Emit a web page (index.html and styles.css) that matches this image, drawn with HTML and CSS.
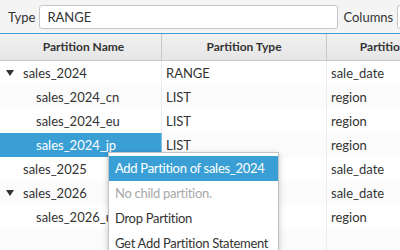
FILE: index.html
```html
<!DOCTYPE html>
<html>
<head>
<meta charset="utf-8">
<link rel="stylesheet" href="styles.css">
</head>
<body>
<div class="app">
  <div class="toolbar">
    <span class="label">Type</span>
    <div class="field field-type">RANGE</div>
    <span class="label label-cols">Columns</span>
    <div class="field field-cols"></div>
  </div>
  <div class="table">
    <div class="header">
      <div class="hcell c1">Partition Name</div>
      <div class="hcell c2">Partition Type</div>
      <div class="hcell c3">Partition Columns</div>
    </div>
    <div class="row">
      <div class="cell c1"><span class="arrow"></span>sales_2024</div>
      <div class="cell c2">RANGE</div>
      <div class="cell c3">sale_date</div>
    </div>
    <div class="row alt">
      <div class="cell c1 child">sales_2024_cn</div>
      <div class="cell c2">LIST</div>
      <div class="cell c3">region</div>
    </div>
    <div class="row">
      <div class="cell c1 child">sales_2024_eu</div>
      <div class="cell c2">LIST</div>
      <div class="cell c3">region</div>
    </div>
    <div class="row alt">
      <div class="cell c1 child selected">sales_2024_jp</div>
      <div class="cell c2">LIST</div>
      <div class="cell c3">region</div>
    </div>
    <div class="row">
      <div class="cell c1 leaf">sales_2025</div>
      <div class="cell c2">RANGE</div>
      <div class="cell c3">sale_date</div>
    </div>
    <div class="row alt">
      <div class="cell c1"><span class="arrow"></span>sales_2026</div>
      <div class="cell c2">RANGE</div>
      <div class="cell c3">sale_date</div>
    </div>
    <div class="row">
      <div class="cell c1 child">sales_2026_us</div>
      <div class="cell c2">LIST</div>
      <div class="cell c3">region</div>
    </div>
    <div class="row alt">
      <div class="cell c1"></div>
      <div class="cell c2"></div>
      <div class="cell c3"></div>
    </div>
    <div class="menu">
      <div class="item active">Add Partition of sales_2024</div>
      <div class="item disabled">No child partition.</div>
      <div class="item">Drop Partition</div>
      <div class="item">Get Add Partition Statement</div>
    </div>
  </div>
</div>
</body>
</html>
```

FILE: styles.css
```css
html, body {
  margin: 0;
  padding: 0;
}
body {
  width: 400px;
  height: 250px;
  overflow: hidden;
  font-family: Lato, "Liberation Sans", sans-serif;
  font-size: 13px;
  color: #333333;
  background: #f4f4f4;
}
.app {
  width: 400px;
  height: 250px;
  overflow: hidden;
}
.toolbar {
  height: 33px;
  box-sizing: border-box;
  padding: 5px 0 0 8px;
  display: flex;
  align-items: flex-start;
  background: #f4f4f4;
  white-space: nowrap;
}
.label {
  height: 24px;
  line-height: 24px;
  margin-right: 4px;
  color: #333;
}
.label-cols {
  margin-left: 5px;
}
.field {
  height: 24px;
  box-sizing: border-box;
  border: 1px solid #c6c6c6;
  border-radius: 3px;
  background: #ffffff;
  line-height: 22px;
  padding-left: 7px;
  flex: none;
}
.field-type {
  width: 299px;
}
.field-cols {
  width: 60px;
}
.table {
  position: relative;
  border-top: 1px solid #3d9fd5;
  background: #ffffff;
  height: 217px;
}
.header {
  display: grid;
  grid-template-columns: 162px 165px 163px;
  height: 27px;
  box-sizing: border-box;
  border-bottom: 1px solid #c8c8c8;
  background: linear-gradient(#f0f0f0, #e6e6e6);
}
.hcell {
  font-weight: bold;
  font-size: 12px;
  text-align: center;
  line-height: 26px;
  border-right: 1px solid #c8c8c8;
  white-space: nowrap;
  overflow: hidden;
}
.row {
  display: grid;
  grid-template-columns: 162px 165px 163px;
  height: 24px;
  background: #ffffff;
}
.row.alt {
  background: #fbfbfb;
}
.cell {
  line-height: 24px;
  padding-left: 4px;
  border-right: 1px solid #ececec;
  white-space: nowrap;
  overflow: hidden;
  display: flex;
  align-items: center;
}
.c1 {
  padding-left: 6px;
}
.child {
  padding-left: 36px;
}
.leaf {
  padding-left: 23px;
}
.selected {
  background: #3a9fd5;
  color: #ffffff;
  border-right-color: #82c3e6;
}
.arrow {
  width: 0;
  height: 0;
  border-left: 4px solid transparent;
  border-right: 4px solid transparent;
  border-top: 6px solid #333;
  margin-right: 9px;
}
.menu {
  position: absolute;
  left: 108px;
  top: 118px;
  width: 171px;
  box-sizing: border-box;
  border: 1px solid #c2c2c2;
  background: #ffffff;
  padding-top: 3px;
  box-shadow: 0 2px 6px rgba(0, 0, 0, 0.22);
}
.item {
  height: 25px;
  line-height: 25px;
  padding-left: 6px;
  white-space: nowrap;
  letter-spacing: -0.3px;
}
.item.active {
  background: #3a9fd5;
  color: #ffffff;
}
.item.disabled {
  color: #a9a9a9;
}
```
